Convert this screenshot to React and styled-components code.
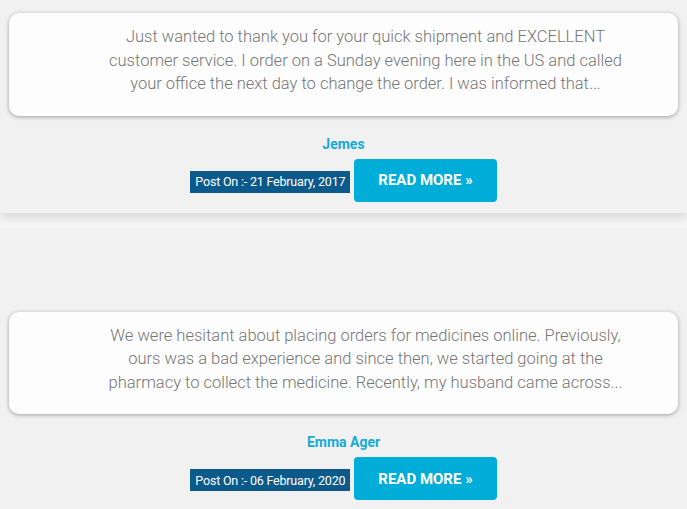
import React from "react";
import styled, { createGlobalStyle } from "styled-components";

const GlobalStyle = createGlobalStyle`
  html, body {
    margin: 0;
    padding: 0;
    background: #f7f7f7;
    font-family: Roboto, "Liberation Sans", sans-serif;
  }
`;

const Page = styled.div`
  width: 687px;
  overflow: hidden;
`;

const Slide = styled.section`
  position: relative;
  z-index: ${(props) => (props.first ? 2 : 1)};
  background: #f1f1f1;
  padding: ${(props) => (props.first ? "13px 9px 11px" : "84px 9px 11px")};
  margin-top: ${(props) => (props.first ? "0" : "15px")};
  box-shadow: ${(props) =>
    props.first ? "0 5px 10px rgba(0, 0, 0, 0.13)" : "none"};
`;

const Card = styled.div`
  background: #fdfdfd;
  border-radius: 10px;
  box-shadow: 0 1px 4px rgba(0, 0, 0, 0.35);
  padding: 12px 44px 20px 88px;
`;

const Quote = styled.p`
  margin: 0;
  font-size: 16.5px;
  font-weight: 300;
  line-height: 23.5px;
  color: #767676;
  text-align: center;
`;

const Name = styled.div`
  margin-top: 20px;
  text-align: center;
  font-size: 14px;
  font-weight: 700;
  line-height: 17px;
  color: #17a9d6;
`;

const Meta = styled.div`
  display: flex;
  justify-content: center;
  align-items: center;
  gap: 4px;
  margin-top: 6px;
`;

const DateBadge = styled.span`
  display: inline-flex;
  align-items: center;
  height: 22px;
  padding: 0 5px;
  margin-top: 3px;
  background: #0c5a8c;
  color: #fff;
  font-size: 12.5px;
  letter-spacing: -0.2px;
`;

const ReadMore = styled.a`
  display: inline-flex;
  align-items: center;
  justify-content: center;
  height: 43px;
  padding: 0 24px;
  background: #00acd8;
  border-radius: 4px;
  color: #fff;
  font-size: 15px;
  font-weight: 700;
  text-decoration: none;
  cursor: pointer;
`;

const reviews = [
  {
    name: "Jemes",
    date: "21 February, 2017",
    text:
      "Just wanted to thank you for your quick shipment and EXCELLENT customer service. I order on a Sunday evening here in the US and called your office the next day to change the order. I was informed that...",
  },
  {
    name: "Emma Ager",
    date: "06 February, 2020",
    text:
      "We were hesitant about placing orders for medicines online. Previously, ours was a bad experience and since then, we started going at the pharmacy to collect the medicine. Recently, my husband came across...",
  },
];

export default function App() {
  return (
    <Page>
      <GlobalStyle />
      {reviews.map((r, i) => (
        <Slide key={r.name} first={i === 0}>
          <Card>
            <Quote>{r.text}</Quote>
          </Card>
          <Name>{r.name}</Name>
          <Meta>
            <DateBadge>Post On :- {r.date}</DateBadge>
            <ReadMore>READ MORE »</ReadMore>
          </Meta>
        </Slide>
      ))}
    </Page>
  );
}
